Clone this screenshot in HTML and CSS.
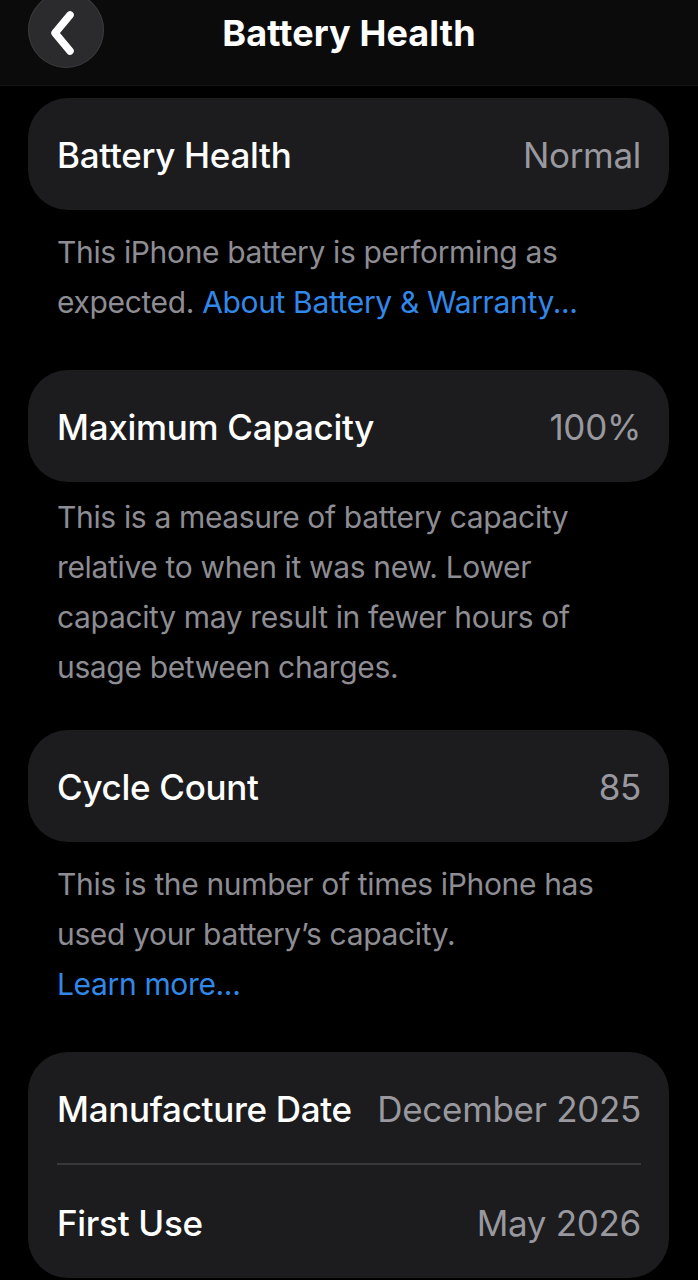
FILE: index.html
```html
<!DOCTYPE html>
<html>
<head>
<meta charset="utf-8">
<link rel="stylesheet" href="styles.css">
</head>
<body>
<div class="header">
  <div class="back">
    <svg width="30" height="46" viewBox="0 0 30 46"><path d="M23 5 L8 23 L23 41" fill="none" stroke="#fff" stroke-width="7.5" stroke-linecap="round" stroke-linejoin="round"/></svg>
  </div>
  <div class="title">Battery Health</div>
</div>
<div class="content">
  <div class="card">
    <div class="row"><span class="label">Battery Health</span><span class="value">Normal</span></div>
  </div>
  <p class="desc d1">This iPhone battery is performing as expected. <span class="link">About Battery &amp; Warranty...</span></p>

  <div class="card">
    <div class="row"><span class="label">Maximum Capacity</span><span class="value">100%</span></div>
  </div>
  <p class="desc d2">This is a measure of battery capacity relative to when it was new. Lower capacity may result in fewer hours of usage between charges.</p>

  <div class="card">
    <div class="row"><span class="label">Cycle Count</span><span class="value">85</span></div>
  </div>
  <p class="desc d3">This is the number of times iPhone has used your battery’s capacity.<br><span class="link">Learn more...</span></p>

  <div class="card group">
    <div class="row r1"><span class="label">Manufacture Date</span><span class="value">December 2025</span></div>
    <div class="sep"></div>
    <div class="row r2"><span class="label">First Use</span><span class="value">May 2026</span></div>
  </div>
</div>
</body>
</html>
```
FILE: styles.css
```css
* { box-sizing: border-box; }
html, body { margin: 0; padding: 0; background: #000; }
body {
  width: 698px;
  height: 1280px;
  overflow: hidden;
  font-family: Inter, "Noto Sans", sans-serif;
  color: #fff;
}
.header {
  height: 86px;
  background: #0b0b0b;
  display: flex;
  align-items: flex-start;
  justify-content: center;
  position: relative;
  border-bottom: 1px solid #141414;
}
.back {
  position: absolute;
  left: 28px;
  top: -8px;
  width: 76px;
  height: 76px;
  border-radius: 50%;
  background: #2b2b2d;
  box-shadow: inset 0 0 0 1px #3a3a3c;
  display: flex;
  align-items: center;
  justify-content: center;
  padding-right: 8px;
  padding-top: 6px;
}
.title {
  margin-top: 11px;
  font-size: 36px;
  font-weight: 700;
  letter-spacing: 0.1px;
}
.content {
  padding: 12px 29px 0 28px;
}
.card {
  background: #1c1c1e;
  border-radius: 40px;
  padding: 0 28px 0 29px;
}
.row {
  height: 112px;
  display: flex;
  align-items: center;
  justify-content: space-between;
  font-size: 35px;
  letter-spacing: -0.3px;
  padding-top: 2px;
}
.label { color: #fff; font-weight: 500; }
.value { color: #98989e; }
.desc {
  padding: 0 28px 0 29px;
  font-size: 30px;
  line-height: 50px;
  color: #8d8d93;
  letter-spacing: -0.35px;
}
.d1 { margin: 17px 0 43px 0; }
.d2 { margin: 10px 0 38px 0; }
.d3 { margin: 17px 0 43px 0; }
.link { color: #3288e8; }
.group .r1 { height: 111px; }
.group .r2 { height: 113px; }
.sep { height: 2px; background: #38383a; }
```
